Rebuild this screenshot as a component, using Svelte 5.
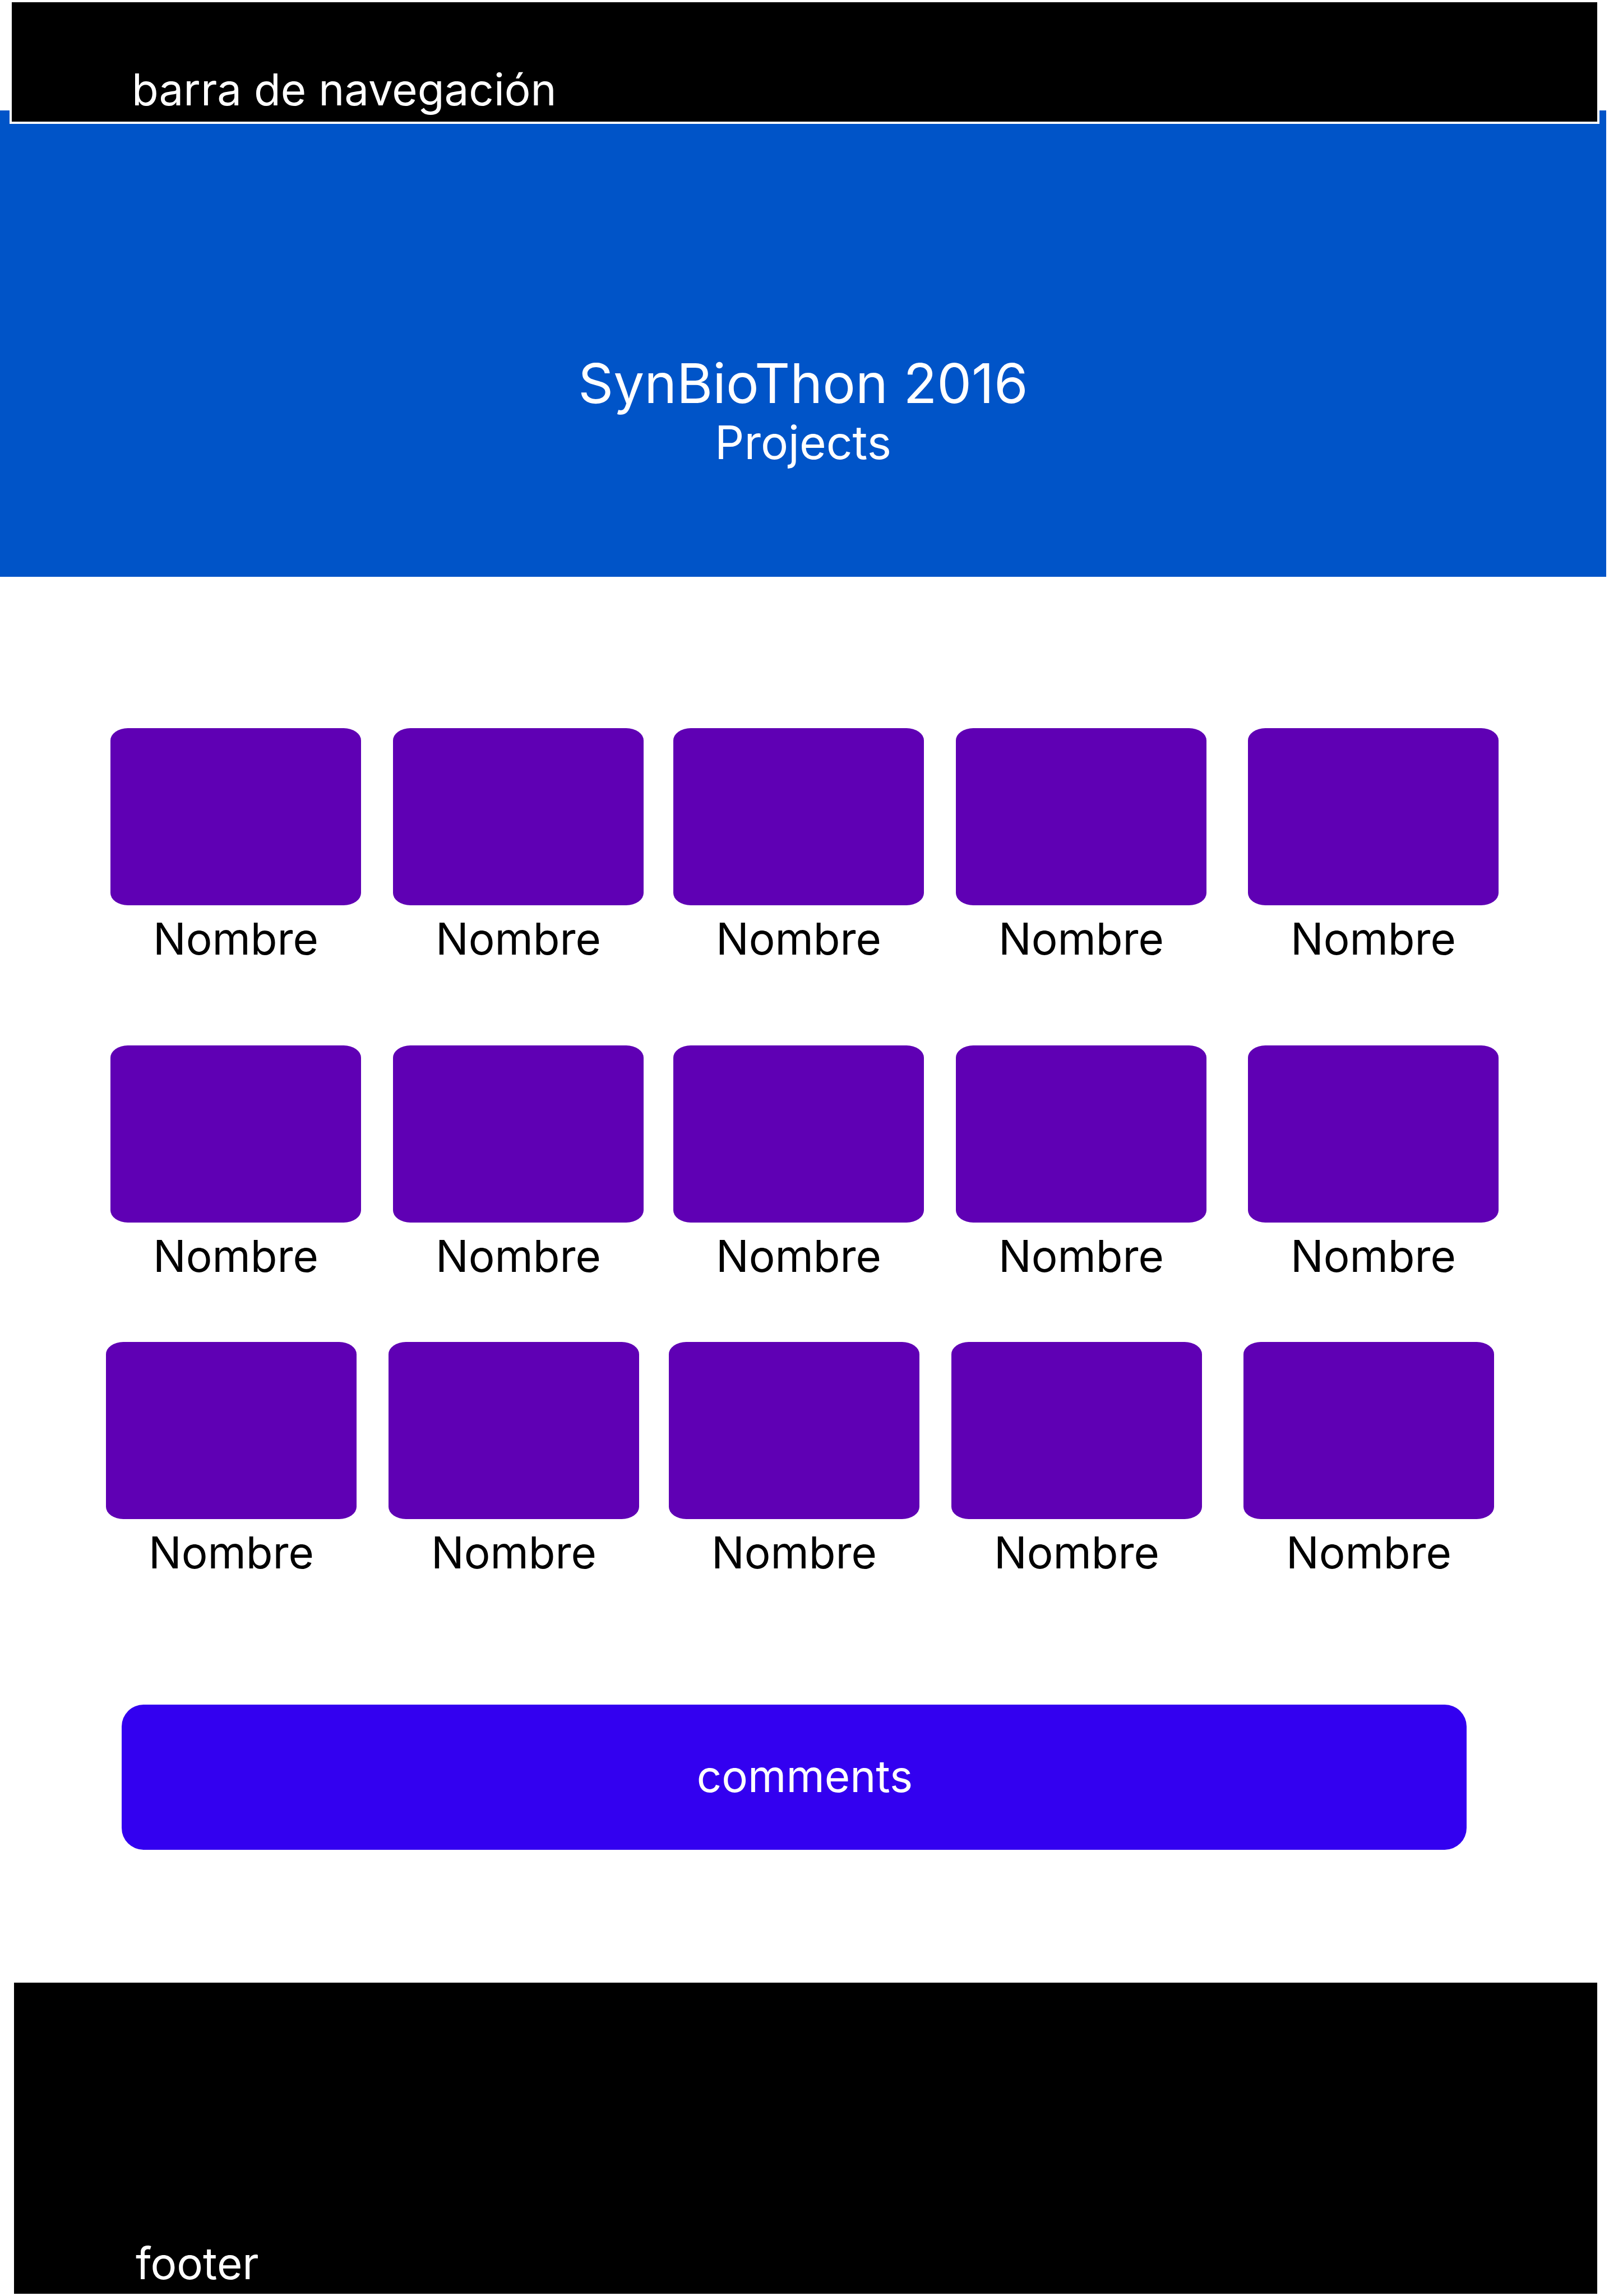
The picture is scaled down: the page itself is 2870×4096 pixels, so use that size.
<script lang="ts">
  const rows: string[][] = Array.from({ length: 3 }, () => Array(5).fill('Nombre'));
</script>

<div class="page">
  <nav class="navbar">barra de navegación</nav>

  <header class="hero">
    <h1>SynBioThon 2016</h1>
    <h2>Projects</h2>
  </header>

  <main>
    {#each rows as row}
      <ul class="row">
        {#each row as name}
          <li class="project">
            <div class="thumb"></div>
            <span class="name">{name}</span>
          </li>
        {/each}
      </ul>
    {/each}

    <button class="comments" type="button">comments</button>
  </main>

  <footer>footer</footer>
</div>

<style>
  :global(body) {
    margin: 0;
    background: #fff;
  }

  .page {
    font-family: Inter, 'Open Sans', sans-serif;
    font-size: 78px;
    line-height: 96px;
    color: #000;
    padding-bottom: 4px;
  }

  .navbar {
    position: relative;
    z-index: 1;
    margin: 0 17px;
    padding: 108px 214px 9px;
    border: 4px solid #fff;
    background: #000;
    color: #fff;
  }

  .hero {
    margin: -24px 5px 0 0;
    padding: 431px 0 191px;
    background: #0054c8;
    color: #fff;
    text-align: center;
  }

  h1,
  h2 {
    margin: 0;
    font-weight: 400;
  }

  h1 {
    font-size: 98px;
    line-height: 112px;
  }

  h2 {
    margin-top: 2px;
    font-size: 82px;
  }

  main {
    padding: 270px 197px 237px;
  }

  .row {
    display: grid;
    grid-template-columns: 1fr 57px 1fr 53px 1fr 57px 1fr 74px 1fr;
    margin: 0 0 142px;
    padding: 0;
    list-style: none;
  }

  .row:nth-of-type(2) {
    margin-bottom: 105px;
  }

  .row:nth-of-type(3) {
    margin: 0 8px 223px -8px;
  }

  .project {
    display: flex;
    flex-direction: column;
    gap: 12px;
    text-align: center;
  }

  .project:nth-child(2) {
    grid-column: 3;
  }

  .project:nth-child(3) {
    grid-column: 5;
  }

  .project:nth-child(4) {
    grid-column: 7;
  }

  .project:nth-child(5) {
    grid-column: 9;
  }

  .thumb {
    height: 316px;
    border-radius: 31px / 22px;
    background: #5f00b4;
  }

  .comments {
    display: block;
    width: calc(100% - 77px);
    height: 259px;
    margin-left: 20px;
    padding: 0 0 4px 38px;
    border: 0;
    border-radius: 39px;
    background: #3300f0;
    color: #fff;
    font: inherit;
  }

  footer {
    margin: 0 21px 0 25px;
    padding: 453px 217px 6px;
    background: #000;
    color: #fff;
  }
</style>
